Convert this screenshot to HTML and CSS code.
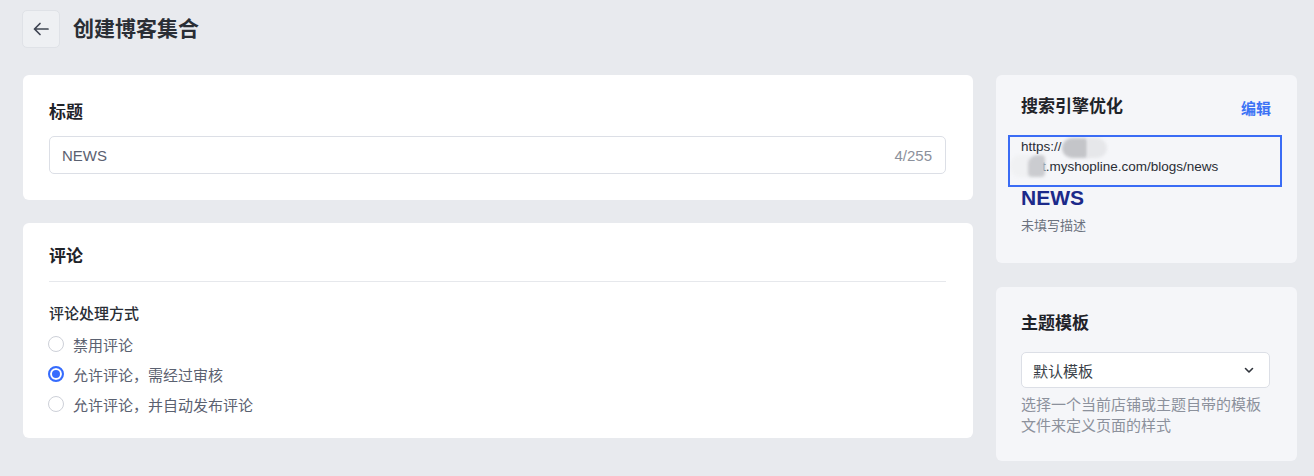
FILE: index.html
```html
<!DOCTYPE html>
<html lang="zh">
<head>
<meta charset="utf-8">
<link rel="stylesheet" href="styles.css">
</head>
<body>
<header class="topbar">
  <button class="back" aria-label="返回">
    <svg width="20" height="20" viewBox="0 0 20 20" fill="none" stroke="#3f4552" stroke-width="1.7" stroke-linecap="round" stroke-linejoin="round"><path d="M17 10H3.5M9 4.5L3.5 10 9 15.5"/></svg>
  </button>
  <h1 class="page-title">创建博客集合</h1>
</header>
<main class="layout">
  <section class="col-main">
    <div class="card card-title">
      <h2 class="card-h">标题</h2>
      <div class="input">
        <span class="input-val">NEWS</span>
        <span class="input-count">4/255</span>
      </div>
    </div>
    <div class="card card-comment">
      <h2 class="card-h">评论</h2>
      <div class="divider"></div>
      <div class="field-label">评论处理方式</div>
      <div class="radios">
        <label class="radio"><span class="dot"></span>禁用评论</label>
        <label class="radio checked"><span class="dot"></span>允许评论，需经过审核</label>
        <label class="radio"><span class="dot"></span>允许评论，并自动发布评论</label>
      </div>
    </div>
  </section>
  <aside class="col-side">
    <div class="card side seo">
      <div class="side-head">
        <h2 class="card-h">搜索引擎优化</h2>
        <a class="edit">编辑</a>
      </div>
      <div class="url">
        <div>https://</div>
        <div class="url-2">t.myshopline.com/blogs/news</div>
        <span class="blur b1"></span>
        <span class="blur b2"></span>
        <span class="blur b3"></span>
        <span class="blur b4"></span>
      </div>
      <div class="seo-title">NEWS</div>
      <div class="seo-desc">未填写描述</div>
    </div>
    <div class="card side tpl">
      <h2 class="card-h">主题模板</h2>
      <div class="select">
        <span>默认模板</span>
        <svg width="12" height="12" viewBox="0 0 12 12" fill="none" stroke="#30343c" stroke-width="1.6" stroke-linecap="round" stroke-linejoin="round"><path d="M2.5 4.5L6 8l3.5-3.5"/></svg>
      </div>
      <p class="help">选择一个当前店铺或主题自带的模板文件来定义页面的样式</p>
    </div>
  </aside>
</main>
</body>
</html>
```
FILE: styles.css
```css
* { box-sizing: border-box; }
html, body { margin: 0; padding: 0; }
body {
  background: #e8eaee;
  font-family: "Liberation Sans", "Noto Sans CJK SC", sans-serif;
  color: #1f2329;
  width: 1314px;
  height: 476px;
  overflow: hidden;
}
.topbar {
  display: flex;
  align-items: center;
  gap: 13px;
  padding: 10px 0 0 22px;
  height: 48px;
}
.back {
  width: 38px;
  height: 38px;
  border: 1px solid #dfe2e7;
  border-radius: 5px;
  background: #eef0f3;
  display: flex;
  align-items: center;
  justify-content: center;
  padding: 0;
}
.page-title {
  margin: 0;
  font-size: 21px;
  font-weight: 600;
  color: #2a2e35;
  line-height: 28px;
}
.layout {
  display: flex;
  gap: 23px;
  padding: 27px 0 0 23px;
}
.col-main {
  width: 950px;
  display: flex;
  flex-direction: column;
  gap: 23px;
}
.col-side {
  width: 301px;
  display: flex;
  flex-direction: column;
  gap: 24px;
}
.card {
  background: #fff;
  border-radius: 6px;
}
.card-h {
  margin: 0;
  font-size: 17px;
  font-weight: 600;
  line-height: 24px;
  color: #1f2329;
}
.card-title { padding: 26px 27px 26px 26px; height: 125px; }
.input {
  margin-top: 11px;
  height: 38px;
  border: 1px solid #dcdfe6;
  border-radius: 5px;
  display: flex;
  align-items: center;
  justify-content: space-between;
  padding: 0 13px 0 12px;
  font-size: 15px;
}
.input-val { color: #5b6170; }
.input-count { color: #8c919c; }
.card-comment { padding: 22px 27px 0 26px; height: 215px; }
.divider { height: 1px; background: #e6e8ec; margin-top: 12px; }
.field-label {
  margin-top: 21px;
  font-size: 15px;
  line-height: 22px;
  font-weight: 500;
  color: #2a2e35;
}
.radios { display: flex; flex-direction: column; margin-top: 4px; }
.radio {
  display: flex;
  align-items: center;
  gap: 9px;
  height: 30px;
  font-size: 15px;
  color: #5b6170;
}
.dot {
  width: 16px;
  height: 16px;
  border-radius: 50%;
  border: 1px solid #cdd0d8;
  background: #fff;
  margin-left: -1px;
  flex: none;
}
.radio.checked .dot {
  border: 2px solid #356bfd;
  box-shadow: inset 0 0 0 2px #fff, inset 0 0 0 8px #356bfd;
}
.side { background: #f5f6f9; }
.seo { padding: 20px 26px 0 25px; height: 188px; }
.side-head {
  display: flex;
  justify-content: space-between;
  align-items: center;
}
.edit {
  color: #3d73f5;
  font-size: 15px;
  font-weight: 600;
}
.url {
  position: relative;
  margin-top: 18px;
  font-size: 13.5px;
  line-height: 20px;
  color: #2a2e35;
  padding-bottom: 7px;
}
.url::after {
  content: "";
  position: absolute;
  left: -13px;
  top: -2px;
  width: 270px;
  height: 48px;
  border: 2.5px solid #3a6cf5;
}
.url-2 { padding-left: 21px; }
.blur {
  position: absolute;
  filter: blur(1.5px);
}
.b1 { left: 41px; top: 1px; width: 26px; height: 20px; background: #c4c5c9; border-radius: 10px 4px 4px 10px; }
.b2 { left: 66px; top: 1px; width: 20px; height: 20px; background: #e6e7ea; border-radius: 0 10px 10px 0; }
.b3 { left: -11px; top: 18px; width: 20px; height: 22px; background: #f0f1f3; border-radius: 11px 0 0 11px; }
.b4 { left: 7px; top: 18px; width: 17px; height: 22px; background: #cbccd0; border-radius: 9px 4px 4px 4px; }
.seo-title {
  font-size: 21px;
  font-weight: 700;
  line-height: 28px;
  color: #1c2a8a;
}
.seo-desc {
  margin-top: 4px;
  font-size: 13px;
  line-height: 20px;
  color: #6b717d;
}
.tpl { padding: 25px 27px 0 25px; height: 174px; }
.select {
  margin-top: 16px;
  height: 36px;
  border: 1px solid #dcdfe6;
  border-radius: 5px;
  background: #fff;
  display: flex;
  align-items: center;
  justify-content: space-between;
  padding: 0 14px 0 11px;
  font-size: 15px;
  color: #3a3f48;
}
.help {
  margin: 6px 0 0;
  font-size: 15px;
  line-height: 21px;
  color: #8c919c;
  width: 245px;
}
```
